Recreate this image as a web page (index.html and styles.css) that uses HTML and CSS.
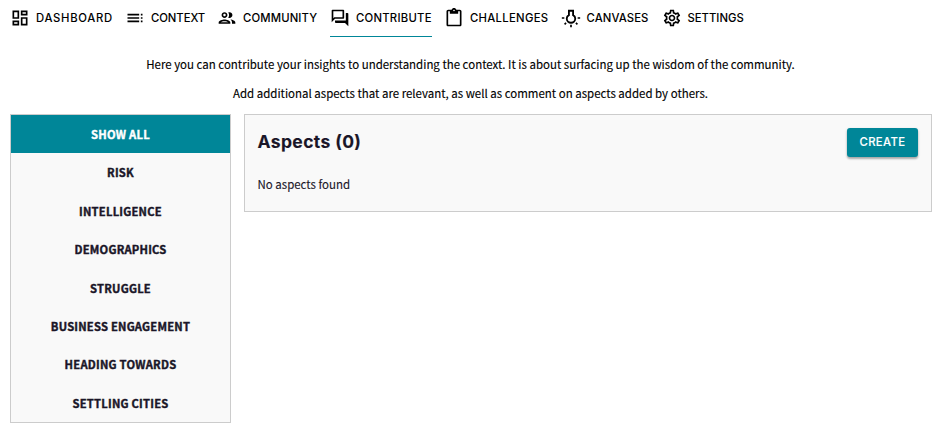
FILE: index.html
```html
<!DOCTYPE html>
<html lang="en">
<head>
<meta charset="utf-8">
<title>Contribute</title>
<link rel="stylesheet" href="styles.css">
</head>
<body>
<nav class="nav">
  <a class="nav-item dashboard"><svg viewBox="0 0 24 24"><path d="M19 5v2h-4V5h4M9 5v6H5V5h4m10 8v6h-4v-6h4M9 17v2H5v-2h4M21 3h-8v6h8V3zM11 3H3v10h8V3zm10 8h-8v10h8V11zm-10 4H3v6h8v-6z"/></svg><span>DASHBOARD</span></a>
  <a class="nav-item context"><svg viewBox="0 0 24 24"><path d="M3 9h14V7H3v2zm0 4h14v-2H3v2zm0 4h14v-2H3v2zm16 0h2v-2h-2v2zm0-10v2h2V7h-2zm0 6h2v-2h-2v2z"/></svg><span>CONTEXT</span></a>
  <a class="nav-item community"><svg viewBox="0 0 24 24"><path d="M9 13.75c-2.34 0-7 1.17-7 3.5V19h14v-1.75c0-2.33-4.66-3.5-7-3.5zM4.34 17c.84-.58 2.87-1.25 4.66-1.25s3.82.67 4.66 1.25H4.34zM9 12c1.93 0 3.5-1.57 3.5-3.5S10.93 5 9 5 5.5 6.57 5.5 8.5 7.07 12 9 12zm0-5c.83 0 1.5.67 1.5 1.5S9.83 10 9 10s-1.5-.67-1.5-1.5S8.17 7 9 7zm7.04 6.81c1.16.84 1.96 1.96 1.96 3.44V19h4v-1.75c0-2.02-3.5-3.17-5.96-3.44zM15 12c1.93 0 3.5-1.57 3.5-3.5S16.93 5 15 5c-.54 0-1.04.13-1.5.35.63.89 1 1.98 1 3.15s-.37 2.26-1 3.15c.46.22.96.35 1.5.35z"/></svg><span>COMMUNITY</span></a>
  <a class="nav-item contribute active"><svg viewBox="0 0 24 24"><path d="M15 4v7H5.17L4 12.17V4h11m1-2H3c-.55 0-1 .45-1 1v14l4-4h10c.55 0 1-.45 1-1V3c0-.55-.45-1-1-1zm5 4h-2v9H6v2c0 .55.45 1 1 1h11l4 4V7c0-.55-.45-1-1-1z"/></svg><span>CONTRIBUTE</span></a>
  <a class="nav-item challenges"><svg viewBox="0 0 24 24"><path d="M19 2h-4.18C14.4.84 13.3 0 12 0S9.6.84 9.18 2H5c-1.1 0-2 .9-2 2v16c0 1.1.9 2 2 2h14c1.1 0 2-.9 2-2V4c0-1.1-.9-2-2-2zm-7 0c.55 0 1 .45 1 1s-.45 1-1 1-1-.45-1-1 .45-1 1-1zm7 18H5V4h2v3h10V4h2v16z"/></svg><span>CHALLENGES</span></a>
  <a class="nav-item canvases"><svg viewBox="0 0 24 24"><path d="M11 20h2v3h-2zM1 11h3v2H1zM20 11h3v2h-3zM17.2 18.600l1.400-1.400 1.800 1.800-1.400 1.400zM3.600 19l1.800-1.800 1.400 1.400-1.800 1.800z"/><path class="bulb" d="M9.500 3.300h5v5.300c1.600.9 2.600 2.300 2.600 4a5.100 5.100 0 0 1-10.200 0c0-1.700 1-3.100 2.600-4z"/></svg><span>CANVASES</span></a>
  <a class="nav-item settings"><svg viewBox="0 0 24 24"><path d="M19.43 12.98c.04-.32.07-.64.07-.98 0-.34-.03-.66-.07-.98l2.11-1.65c.19-.15.24-.42.12-.64l-2-3.46c-.09-.16-.26-.25-.44-.25-.06 0-.12.01-.17.03l-2.49 1c-.52-.4-1.08-.73-1.69-.98l-.38-2.65C14.46 2.18 14.25 2 14 2h-4c-.25 0-.46.18-.49.42l-.38 2.65c-.61.25-1.17.59-1.69.98l-2.49-1c-.06-.02-.12-.03-.18-.03-.17 0-.34.09-.43.25l-2 3.46c-.13.22-.07.49.12.64l2.11 1.65c-.04.32-.07.65-.07.98 0 .33.03.66.07.98l-2.11 1.65c-.19.15-.24.42-.12.64l2 3.46c.09.16.26.25.44.25.06 0 .12-.01.17-.03l2.49-1c.52.4 1.08.73 1.69.98l.38 2.65c.03.24.24.42.49.42h4c.25 0 .46-.18.49-.42l.38-2.65c.61-.25 1.17-.59 1.69-.98l2.49 1c.06.02.12.03.18.03.17 0 .34-.09.43-.25l2-3.46c.12-.22.07-.49-.12-.64l-2.11-1.65zm-1.98-1.71c.04.31.05.52.05.73 0 .21-.02.43-.05.73l-.14 1.13.89.7 1.08.84-.7 1.21-1.27-.51-1.04-.42-.9.68c-.43.32-.84.56-1.25.73l-1.06.43-.16 1.13-.2 1.35h-1.4l-.19-1.35-.16-1.13-1.06-.43c-.43-.18-.83-.41-1.23-.71l-.91-.7-1.06.43-1.27.51-.7-1.21 1.08-.84.89-.7-.14-1.13c-.03-.31-.05-.54-.05-.74s.02-.43.05-.73l.14-1.13-.89-.7-1.08-.84.7-1.21 1.27.51 1.04.42.9-.68c.43-.32.84-.56 1.25-.73l1.06-.43.16-1.13.2-1.35h1.39l.19 1.35.16 1.13 1.06.43c.43.18.83.41 1.23.71l.91.7 1.06-.43 1.27-.51.7 1.21-1.07.85-.89.7.14 1.13zM12 8c-2.21 0-4 1.79-4 4s1.79 4 4 4 4-1.79 4-4-1.79-4-4-4zm0 6c-1.1 0-2-.9-2-2s.9-2 2-2 2 .9 2 2-.9 2-2 2z"/></svg><span>SETTINGS</span></a>
</nav>
<section class="intro">
  <p class="lead">Here you can contribute your insights to understanding the context. It is about surfacing up the wisdom of the community.</p>
  <p class="sub">Add additional aspects that are relevant, as well as comment on aspects added by others.</p>
</section>
<main class="content">
  <ul class="filters">
    <li class="selected">SHOW ALL</li>
    <li>RISK</li>
    <li>INTELLIGENCE</li>
    <li>DEMOGRAPHICS</li>
    <li>STRUGGLE</li>
    <li>BUSINESS ENGAGEMENT</li>
    <li>HEADING TOWARDS</li>
    <li>SETTLING CITIES</li>
  </ul>
  <section class="panel">
    <header class="panel-head">
      <h1>Aspects (0)</h1>
      <button class="create">CREATE</button>
    </header>
    <p class="empty">No aspects found</p>
  </section>
</main>
</body>
</html>
```
FILE: styles.css
```css
* { box-sizing: border-box; }
body {
  margin: 0;
  background: #fff;
  color: #000;
  font-family: "Noto Sans CJK SC", sans-serif;
  font-size: 11.47px;
  -webkit-text-stroke: .12px;
}
.nav {
  display: flex;
  height: 37px;
  padding-left: 10px;
  font: 500 11.3px/20px Inter, sans-serif;
  -webkit-text-stroke: 0;
}
.nav-item {
  display: flex;
  flex: none;
  gap: 6px;
  padding-top: 8px;
  margin-right: 12px;
  white-space: nowrap;
}
.nav-item svg { flex: none; width: 20px; height: 20px; }
.bulb { fill: none; stroke: #000; stroke-width: 2.2; }
.nav-item.active { border-bottom: 1px solid #008698; }
.dashboard { width: 103px; letter-spacing: .7px; }
.context { width: 80px; letter-spacing: -.05px; }
.community { width: 101px; letter-spacing: .15px; }
.contribute { width: 102px; letter-spacing: .25px; }
.challenges { width: 104.5px; letter-spacing: .3px; }
.canvases { width: 89px; letter-spacing: .1px; }
.settings { width: 83px; }
.intro { text-align: center; }
.intro p { margin: 0; line-height: 20px; }
.intro .lead { margin-top: 17px; }
.intro .sub { margin-top: 9px; }
.content {
  display: flex;
  align-items: flex-start;
  gap: 13px;
  margin-top: 11px;
  padding: 0 9px 0 10px;
}
.filters {
  width: 221px;
  height: 309px;
  margin: 0;
  padding: 0;
  display: grid;
  grid-auto-rows: 38.375px;
  list-style: none;
  border: 1px solid #ccc;
  background: #f9f9f9;
  color: #1a1628;
  font-size: 11.2px;
  font-weight: 700;
  letter-spacing: .23px;
  text-align: center;
  -webkit-text-stroke: .4px;
}
.filters li { line-height: 38px; }
.filters .selected { background: #008698; color: #fff; }
.panel {
  flex: 1;
  height: 98px;
  padding: 13px 13px 13px 12.5px;
  border: 1px solid #ccc;
  background: #f9f9f9;
  color: #1a1628;
}
.panel-head { display: flex; justify-content: space-between; height: 29px; }
h1 { margin: 0; font: 700 17.5px/28px Inter, sans-serif; letter-spacing: .38px; }
.create {
  width: 71px;
  height: 29px;
  padding: 0;
  border: 0;
  border-radius: 3px;
  background: #008698;
  color: #fff;
  font: 500 11.3px/29px Inter, sans-serif;
  letter-spacing: .4px;
  box-shadow: 0 2px 2px rgba(0, 0, 0, .24), 0 1px 3px rgba(0, 0, 0, .16);
}
.empty { margin: 17px 0 0; line-height: 20px; }
```
